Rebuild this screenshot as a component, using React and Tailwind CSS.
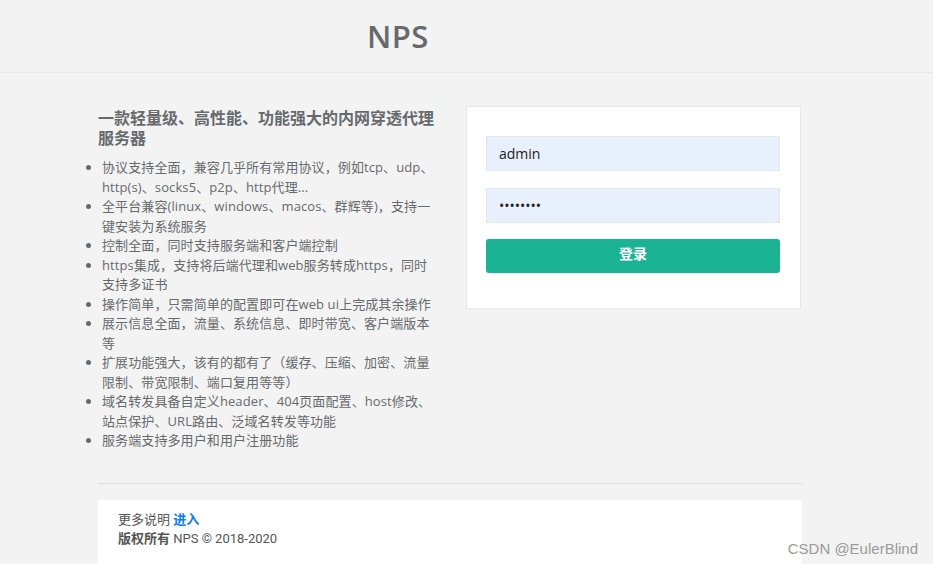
export default function App() {
  const features = [
    "协议支持全面，兼容几乎所有常用协议，例如tcp、udp、http(s)、socks5、p2p、http代理...",
    "全平台兼容(linux、windows、macos、群辉等)，支持一键安装为系统服务",
    "控制全面，同时支持服务端和客户端控制",
    "https集成，支持将后端代理和web服务转成https，同时支持多证书",
    "操作简单，只需简单的配置即可在web ui上完成其余操作",
    "展示信息全面，流量、系统信息、即时带宽、客户端版本等",
    "扩展功能强大，该有的都有了（缓存、压缩、加密、流量限制、带宽限制、端口复用等等）",
    "域名转发具备自定义header、404页面配置、host修改、站点保护、URL路由、泛域名转发等功能",
    "服务端支持多用户和用户注册功能",
  ];

  return (
    <div className="relative h-[564px] overflow-hidden bg-[#f3f3f3] font-['Open_Sans','Noto_Sans_CJK_SC',sans-serif] text-[#676a6c]">
      {/* header */}
      <header className="flex h-[73px] items-center border-b border-[#e7e7e7]">
        <h1 className="pl-[367px] text-[31px] font-semibold leading-none tracking-[0.5px] text-[#676a6c]">
          NPS
        </h1>
      </header>

      <main className="ml-[98px] w-[704px]">
        <div className="flex gap-[28px] pt-[33px]">
          {/* intro */}
          <div className="w-[340px] pt-[2px]">
            <h2 className="text-[16px] font-bold leading-[20px]">
              一款轻量级、高性能、功能强大的内网穿透代理服务器
            </h2>
            <ul className="mt-[10px] w-[336px] list-disc pl-[4px] text-[13px] leading-[19.5px] tracking-[0.1px] marker:text-[#676a6c]">
              {features.map((f) => (
                <li key={f}>{f}</li>
              ))}
            </ul>
          </div>

          {/* login card */}
          <div className="h-[203px] w-[335px] border border-[#e7e7e7] bg-white pl-[19px] pr-[20px] pt-[29px]">
            <input
              readOnly
              value="admin"
              className="block h-[35px] w-full border border-[#e5e6e7] bg-[#e8f0fe] px-[12px] text-[14px] text-[#222] outline-none"
            />
            <input
              readOnly
              type="password"
              value="12345678"
              className="mt-[17px] block h-[35px] w-full border border-[#e5e6e7] bg-[#e8f0fe] px-[12px] text-[14px] text-[#222] outline-none"
            />
            <button className="mt-[16px] flex h-[34px] w-full items-center justify-center rounded-[3px] bg-[#1ab394] pb-[4px] text-[14px] font-bold leading-none text-white">
              登录
            </button>
          </div>
        </div>

        <hr className="mt-[32px] border-t border-[#dddddd]" />

        {/* footer */}
        <footer className="mt-[16px] h-[80px] bg-white px-[20px] pt-[10px] font-['Roboto','Noto_Sans_CJK_SC',sans-serif] text-[13px] leading-[19.5px] text-[#555]">
          <div>
            更多说明 <a className="font-bold text-[#0a7bff]">进入</a>
          </div>
          <div>
            <span className="font-bold">版权所有</span> NPS © 2018-2020
          </div>
        </footer>
      </main>

      <div className="absolute bottom-[4px] right-[15px] font-['Liberation_Sans',sans-serif] text-[15px] text-[#9a9a9a]">
        CSDN @EulerBlind
      </div>
    </div>
  );
}
